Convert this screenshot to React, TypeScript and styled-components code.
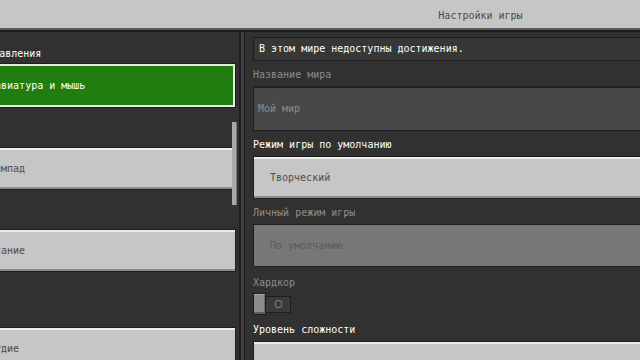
import styled, { createGlobalStyle } from "styled-components";

const GlobalStyle = createGlobalStyle`
  html, body {
    margin: 0;
    padding: 0;
    overflow: hidden;
    background: #313131;
  }
  body {
    font-family: "DejaVu Sans Mono", "Liberation Mono", monospace;
    font-size: 10px;
    line-height: 12px;
  }
`;

const Screen = styled.div`
  width: 768px;
  height: 360px;
  margin-left: -51px;
  display: grid;
  grid-template-columns: 292px 3px 473px;
  grid-template-rows: 32px 328px;
  background: #3e3e3e;
`;

const Header = styled.header`
  grid-column: 1 / -1;
  display: grid;
  grid-template-columns: 292px 3px 473px;
  align-items: center;
  box-sizing: border-box;
  height: 32px;
  padding-top: 2px;
  background: #c6c6c6;
  border-bottom: 2px solid #1e1e1e;
  box-shadow: inset 0 -2px #5a5a5a;
  color: #4c4c4c;
`;

const HeaderTitle = styled.div<{ $center?: boolean }>`
  grid-column: ${(p) => (p.$center ? 3 : 1)};
  margin-left: ${(p) => (p.$center ? 0 : -3)}px;
  text-align: ${(p) => (p.$center ? "center" : "left")};
  white-space: nowrap;
`;

const SidePanel = styled.aside`
  position: relative;
  display: flex;
  flex-direction: column;
  padding: 16px 3px 0 8px;
  background: #313131;
  border-right: 2px solid #1e1e1e;
  overflow: hidden;
  color: #ffffff;
`;

const Scrollbar = styled.div`
  position: absolute;
  top: 90px;
  right: 2px;
  width: 4px;
  height: 83px;
  background: #a8a8a8;
  border-right: 1px solid #7c7c7c;
`;

const MainPanel = styled.main`
  display: flex;
  flex-direction: column;
  padding: 5px 8px 0 8px;
  background: #313131;
  border-left: 1px solid #1e1e1e;
  overflow: hidden;
`;

const Label = styled.div<{ $muted?: boolean }>`
  color: ${(p) => (p.$muted ? "#8c8c8c" : "#ffffff")};
  white-space: nowrap;
`;

const OptionButton = styled.div<{ $selected?: boolean; $space?: number; $height?: number }>`
  flex: none;
  display: flex;
  align-items: center;
  box-sizing: border-box;
  height: ${(p) => p.$height ?? 43}px;
  margin-top: ${(p) => p.$space ?? 0}px;
  padding-left: 25px;
  border: 1px solid #1e1e1e;
  background: ${(p) => (p.$selected ? "#1f7e0f" : "#c6c6c6")};
  color: ${(p) => (p.$selected ? "#ffffff" : "#4c4c4c")};
  box-shadow: ${(p) =>
    p.$selected
      ? "inset 0 0 0 2px #e6ece4"
      : "inset 0 2px #ececec, inset 0 -2px #8b8b8b"};
  white-space: nowrap;
`;

const Notice = styled.div`
  flex: none;
  display: flex;
  align-items: center;
  box-sizing: border-box;
  height: 24px;
  padding-left: 5px;
  border: 1px solid #1e1e1e;
  background: #373737;
  color: #ffffff;
  white-space: nowrap;
`;

const Setting = styled.div<{ $space?: number; $gap?: number }>`
  flex: none;
  display: flex;
  flex-direction: column;
  gap: ${(p) => p.$gap ?? 5}px;
  margin-top: ${(p) => p.$space ?? 8}px;
`;

const TextField = styled.div`
  display: flex;
  align-items: center;
  box-sizing: border-box;
  height: 45px;
  padding-left: 4px;
  border: 1px solid #1e1e1e;
  border-top-width: 2px;
  background: #484848;
  color: #8c8c8c;
`;

const Dropdown = styled.div<{ $disabled?: boolean }>`
  display: flex;
  align-items: center;
  box-sizing: border-box;
  height: 43px;
  padding-left: 16px;
  border: 1px solid #1e1e1e;
  background: ${(p) => (p.$disabled ? "#777777" : "#c6c6c6")};
  color: ${(p) => (p.$disabled ? "#5a5a5a" : "#4c4c4c")};
  box-shadow: ${(p) =>
    p.$disabled ? "none" : "inset 0 2px #ececec, inset 0 -2px #8b8b8b"};
  white-space: nowrap;
`;

const Toggle = styled.div`
  display: flex;
  align-items: center;
  height: 22px;
`;

const Knob = styled.div`
  box-sizing: border-box;
  width: 13px;
  height: 22px;
  border: 1px solid #1e1e1e;
  background: #8b8b8b;
  box-shadow: inset 0 1px #a9a9a9, inset -1px 0 #6a6a6a, inset 0 -2px #5e5e5e;
  position: relative;
  z-index: 1;
`;

const Track = styled.div`
  display: flex;
  align-items: center;
  justify-content: center;
  box-sizing: border-box;
  width: 26px;
  height: 17px;
  margin-left: -1px;
  border: 1px solid #1e1e1e;
  background: #3a3a3a;
`;

const OffMark = styled.span`
  box-sizing: border-box;
  width: 7px;
  height: 8px;
  border: 1px solid #858585;
  border-radius: 3px;
`;

export default function App() {
  return (
    <>
      <GlobalStyle />
      <Screen>
        <Header>
          <HeaderTitle>Настройки</HeaderTitle>
          <HeaderTitle $center>Настройки игры</HeaderTitle>
        </Header>

        <SidePanel>
          <Label>Тип управления</Label>
          <OptionButton $selected $space={3} $height={45}>
            Клавиатура и мышь
          </OptionButton>
          <OptionButton $space={39}>Геймпад</OptionButton>
          <OptionButton $space={39}>Касание</OptionButton>
          <OptionButton $space={55}>Орудие</OptionButton>
          <Scrollbar />
        </SidePanel>

        <div />

        <MainPanel>
          <Notice>В этом мире недоступны достижения.</Notice>
          <Setting>
            <Label $muted>Название мира</Label>
            <TextField>Мой мир</TextField>
          </Setting>
          <Setting>
            <Label>Режим игры по умолчанию</Label>
            <Dropdown>Творческий</Dropdown>
          </Setting>
          <Setting>
            <Label $muted>Личный режим игры</Label>
            <Dropdown $disabled>По умолчанию</Dropdown>
          </Setting>
          <Setting $space={10} $gap={4}>
            <Label $muted>Хардкор</Label>
            <Toggle>
              <Knob />
              <Track>
                <OffMark />
              </Track>
            </Toggle>
          </Setting>
          <Setting $space={9}>
            <Label>Уровень сложности</Label>
            <Dropdown />
          </Setting>
        </MainPanel>
      </Screen>
    </>
  );
}
